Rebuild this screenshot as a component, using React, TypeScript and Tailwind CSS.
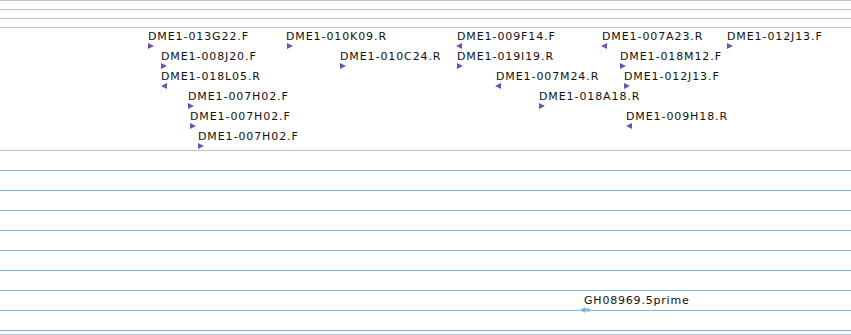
import React from 'react';

type Feat = { label: string; x: number; row: number; dir: 'r' | 'l'; tx?: number };

const feats: Feat[] = [
  { label: 'DME1-013G22.F', x: 148, row: 0, dir: 'r' },
  { label: 'DME1-010K09.R', x: 286, row: 0, dir: 'r', tx: 287 },
  { label: 'DME1-009F14.F', x: 457, row: 0, dir: 'l', tx: 456 },
  { label: 'DME1-007A23.R', x: 602, row: 0, dir: 'l', tx: 601 },
  { label: 'DME1-012J13.F', x: 727, row: 0, dir: 'r' },
  { label: 'DME1-008J20.F', x: 161, row: 1, dir: 'r' },
  { label: 'DME1-010C24.R', x: 340, row: 1, dir: 'r' },
  { label: 'DME1-019I19.R', x: 457, row: 1, dir: 'r' },
  { label: 'DME1-018M12.F', x: 620, row: 1, dir: 'r' },
  { label: 'DME1-018L05.R', x: 161, row: 2, dir: 'l' },
  { label: 'DME1-007M24.R', x: 496, row: 2, dir: 'l', tx: 495 },
  { label: 'DME1-012J13.F', x: 624, row: 2, dir: 'r' },
  { label: 'DME1-007H02.F', x: 188, row: 3, dir: 'r' },
  { label: 'DME1-018A18.R', x: 539, row: 3, dir: 'r' },
  { label: 'DME1-007H02.F', x: 190, row: 4, dir: 'r' },
  { label: 'DME1-009H18.R', x: 626, row: 4, dir: 'l' },
  { label: 'DME1-007H02.F', x: 198, row: 5, dir: 'r' },
];

function Tri({ dir, color }: { dir: 'r' | 'l'; color: string }) {
  return (
    <svg width="6" height="6" viewBox="0 0 6 6" className="block">
      {dir === 'r' ? <polygon points="0,0 6,3 0,6" fill={color} /> : <polygon points="6,0 0,3 6,6" fill={color} />}
    </svg>
  );
}

const font = { fontFamily: '"DejaVu Sans", Verdana, sans-serif' };

export default function App() {
  return (
    <div className="relative w-[851px] h-[335px] bg-white overflow-hidden" style={font}>
      <div className="h-px bg-[#c4c4c4]" />
      <div className="h-[8px]" />
      <div className="h-px bg-[#c4c4c4]" />
      <div className="h-[8px]" />
      <div className="h-px bg-[#c4c4c4]" />
      <div className="h-[8px]" />
      <div className="h-px bg-[#c4c4c4]" />

      <div className="relative h-[122px]">
        {feats.map((f, i) => (
          <React.Fragment key={i}>
            <div
              className="absolute text-[11px] leading-[13px] tracking-[0.9px] text-[#111] whitespace-nowrap"
              style={{ left: f.x, top: 2 + f.row * 20 }}
            >
              {f.label}
            </div>
            <div className="absolute" style={{ left: f.tx ?? f.x, top: 15 + f.row * 20 }}>
              <Tri dir={f.dir} color="#6c54b4" />
            </div>
          </React.Fragment>
        ))}
      </div>

      <div className="h-px bg-[#c4c4c4]" />
      {Array.from({ length: 9 }).map((_, i) => (
        <React.Fragment key={i}>
          <div className="h-[19px]" />
          <div className="h-px bg-[#7fb7e3]" />
        </React.Fragment>
      ))}
      <div className="h-[3px]" />
      <div className="h-px bg-[#c4c4c4]" />

      <div className="absolute left-[584px] top-[294px] text-[11px] leading-[13px] tracking-[0.8px] text-[#111] whitespace-nowrap">
        GH08969.5prime
      </div>
      <div className="absolute left-[580px] top-[307px]">
        <svg width="10" height="6" viewBox="0 0 10 6" className="block">
          <polygon points="0,3 5,0 5,6" fill="#7fb6e2" />
          <rect x="4" y="1.5" width="6" height="3" fill="#7fb6e2" />
        </svg>
      </div>
    </div>
  );
}
